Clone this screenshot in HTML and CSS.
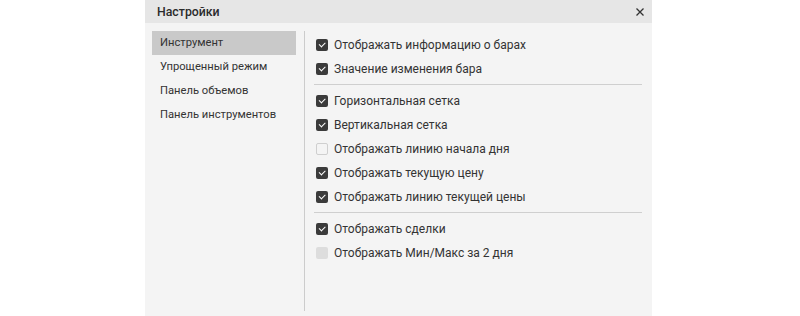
FILE: index.html
```html
<!DOCTYPE html>
<html lang="ru">
<head>
<meta charset="utf-8">
<link rel="stylesheet" href="styles.css">
</head>
<body>
<div class="dialog">
  <div class="header">
    <span class="title">Настройки</span>
    <svg class="close" width="8" height="8" viewBox="0 0 8 8"><path d="M0.5 0.5L7.5 7.5M7.5 0.5L0.5 7.5" stroke="#333" stroke-width="1.3"/></svg>
  </div>
  <div class="body">
    <ul class="nav">
      <li class="nav-item active">Инструмент</li>
      <li class="nav-item">Упрощенный режим</li>
      <li class="nav-item">Панель объемов</li>
      <li class="nav-item">Панель инструментов</li>
    </ul>
    <div class="content">
      <div class="row"><span class="cb on"></span>Отображать информацию о барах</div>
      <div class="row"><span class="cb on"></span>Значение изменения бара</div>
      <div class="sep"></div>
      <div class="row"><span class="cb on"></span>Горизонтальная сетка</div>
      <div class="row"><span class="cb on"></span>Вертикальная сетка</div>
      <div class="row"><span class="cb off"></span>Отображать линию начала дня</div>
      <div class="row"><span class="cb on"></span>Отображать текущую цену</div>
      <div class="row"><span class="cb on"></span>Отображать линию текущей цены</div>
      <div class="sep"></div>
      <div class="row"><span class="cb on"></span>Отображать сделки</div>
      <div class="row"><span class="cb disabled"></span>Отображать Мин/Макс за 2 дня</div>
    </div>
  </div>
</div>
</body>
</html>
```
FILE: styles.css
```css
html, body {
  margin: 0;
  padding: 0;
  background: #ffffff;
}
body {
  font-family: Roboto, "Liberation Sans", sans-serif;
  color: #333333;
}
.dialog {
  width: 507px;
  height: 316px;
  margin-left: 145px;
  background: #f4f4f4;
  display: flex;
  flex-direction: column;
}
.header {
  height: 23px;
  background: #e6e6e6;
  display: flex;
  align-items: center;
  justify-content: space-between;
  padding: 0 8px 0 12px;
}
.title {
  font-size: 12.3px;
  font-weight: 500;
  color: #2b2b2b;
}
.close {
  display: block;
  margin-top: 1px;
}
.body {
  flex: 1;
  display: flex;
  padding: 8px 10px 5px 7px;
}
.nav {
  list-style: none;
  margin: 0 8px 0 0;
  padding: 0;
  width: 144px;
}
.nav-item {
  height: 24px;
  line-height: 24px;
  padding-left: 8px;
  font-size: 11.2px;
  color: #333333;
}
.nav-item.active {
  background: #c9c9c9;
}
.content {
  flex: 1;
  border-left: 1px solid #cccccc;
  padding: 2px 0 0 9px;
}
.row {
  height: 24px;
  display: flex;
  align-items: center;
  padding-left: 2px;
  font-size: 12px;
  color: #333333;
}
.cb {
  width: 12px;
  height: 12px;
  box-sizing: border-box;
  border-radius: 2px;
  margin-right: 6px;
  flex: none;
  position: relative;
}
.cb.on {
  background: #3b3b3b;
}
.cb.on::after {
  content: "";
  position: absolute;
  left: 3px;
  top: 3px;
  width: 5px;
  height: 2.5px;
  border-left: 1.3px solid #ffffff;
  border-bottom: 1.3px solid #ffffff;
  transform: rotate(-45deg);
}
.cb.off {
  background: #f4f4f4;
  border: 1px solid #cfcfcf;
}
.cb.disabled {
  background: #dddddd;
}
.sep {
  height: 1px;
  background: #cfcfcf;
  margin: 3px 0 4px 0;
}
```
